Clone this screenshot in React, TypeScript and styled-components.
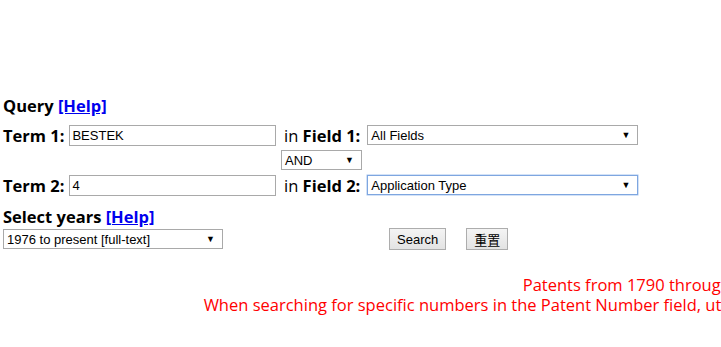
import React from "react";
import styled, { createGlobalStyle } from "styled-components";

const Global = createGlobalStyle`
  html, body { margin: 0; padding: 0; background: #fff; overflow: hidden; }
  body { font-family: "Open Sans", "Noto Sans", sans-serif; font-size: 16px; color: #000; }
`;

const Page = styled.div`
  width: 1920px;
  padding: 96px 0 0 3px;
  box-sizing: border-box;
`;

const Heading = styled.div`
  font-weight: bold;
  font-size: 16.5px;
  line-height: 20px;
  height: 20px;
`;

const HelpLink = styled.a`
  color: #0000ee;
  text-decoration: underline;
  font-weight: bold;
`;

const QueryGrid = styled.div`
  display: grid;
  grid-template-columns: 278px auto;
  row-gap: 5px;
  margin-top: 9px;
  align-items: center;
`;

const Cell = styled.div`
  display: flex;
  align-items: center;
  height: 20px;
  white-space: nowrap;
`;

const Label = styled.span`
  font-weight: bold;
  font-size: 16.5px;
  margin-right: 5px;
`;

const FieldLabel = styled.span`
  font-size: 16.5px;
  margin: 0 7px 0 3px;
  b { font-weight: bold; }
`;

const TextInput = styled.input`
  width: 207px;
  height: 21px;
  box-sizing: border-box;
  border: 1px solid #a9a9a9;
  padding: 1px 2px;
  font-family: Arial, "Liberation Sans", sans-serif;
  font-size: 13px;
  color: #000;
  outline: none;
`;

const SelectBox = styled.div<{ $w: number; $focus?: boolean }>`
  width: ${(p) => p.$w}px;
  height: 20px;
  box-sizing: border-box;
  border: 1px solid ${(p) => (p.$focus ? "#7ea6e0" : "#a9a9a9")};
  box-shadow: ${(p) => (p.$focus ? "0 0 0 0.5px #a8c6f0" : "none")};
  display: flex;
  align-items: center;
  justify-content: space-between;
  padding: 0 7px 0 3px;
  font-family: Arial, "Liberation Sans", sans-serif;
  font-size: 13px;
  color: #000;
  background: #fff;
`;

const Arrow = styled.span`
  font-size: 9px;
  line-height: 1;
  color: #000;
`;

const YearsHeading = styled(Heading)`
  margin-top: 12px;
`;

const BottomRow = styled.div`
  display: flex;
  align-items: center;
  margin-top: 1px;
`;

const Button = styled.button<{ $ml: number }>`
  margin-left: ${(p) => p.$ml}px;
  height: 22px;
  padding: 0 7px;
  border: 1px solid #adadad;
  background: linear-gradient(#f4f4f4, #e3e3e3);
  font-family: Arial, "Liberation Sans", "Noto Sans CJK SC", sans-serif;
  font-size: 13px;
  color: #000;
  border-radius: 0;
`;

const Notes = styled.div`
  margin-top: 25px;
  margin-left: -3px;
  width: 1920px;
  text-align: center;
  color: #ff0000;
  font-size: 16.5px;
  line-height: 20px;
  white-space: nowrap;
`;

const Select = ({ w, value, focus }: { w: number; value: string; focus?: boolean }) => (
  <SelectBox $w={w} $focus={focus}>
    <span>{value}</span>
    <Arrow>▼</Arrow>
  </SelectBox>
);

export default function App() {
  return (
    <>
      <Global />
      <Page>
        <Heading>
          Query <HelpLink href="#">[Help]</HelpLink>
        </Heading>
        <QueryGrid>
          <Cell>
            <Label>Term 1:</Label>
            <TextInput defaultValue="BESTEK" />
          </Cell>
          <Cell>
            <FieldLabel>
              in <b>Field 1:</b>
            </FieldLabel>
            <Select w={271} value="All Fields" />
          </Cell>
          <Cell />
          <Cell>
            <Select w={81} value="AND" />
          </Cell>
          <Cell>
            <Label>Term 2:</Label>
            <TextInput defaultValue="4" />
          </Cell>
          <Cell>
            <FieldLabel>
              in <b>Field 2:</b>
            </FieldLabel>
            <Select w={271} value="Application Type" focus />
          </Cell>
        </QueryGrid>
        <YearsHeading>
          Select years <HelpLink href="#">[Help]</HelpLink>
        </YearsHeading>
        <BottomRow>
          <Select w={220} value="1976 to present [full-text]" />
          <Button $ml={166}>Search</Button>
          <Button $ml={20}>重置</Button>
        </BottomRow>
        <Notes>
          Patents from 1790 through 1975 are searchable only by Issue Date, Patent Number, and Current US Classification.
          <br />
          When searching for specific numbers in the Patent Number field, utility patent numbers are entered as one to eight numbers in length, excluding commas (which are optional, as are leading zeroes).
        </Notes>
      </Page>
    </>
  );
}
